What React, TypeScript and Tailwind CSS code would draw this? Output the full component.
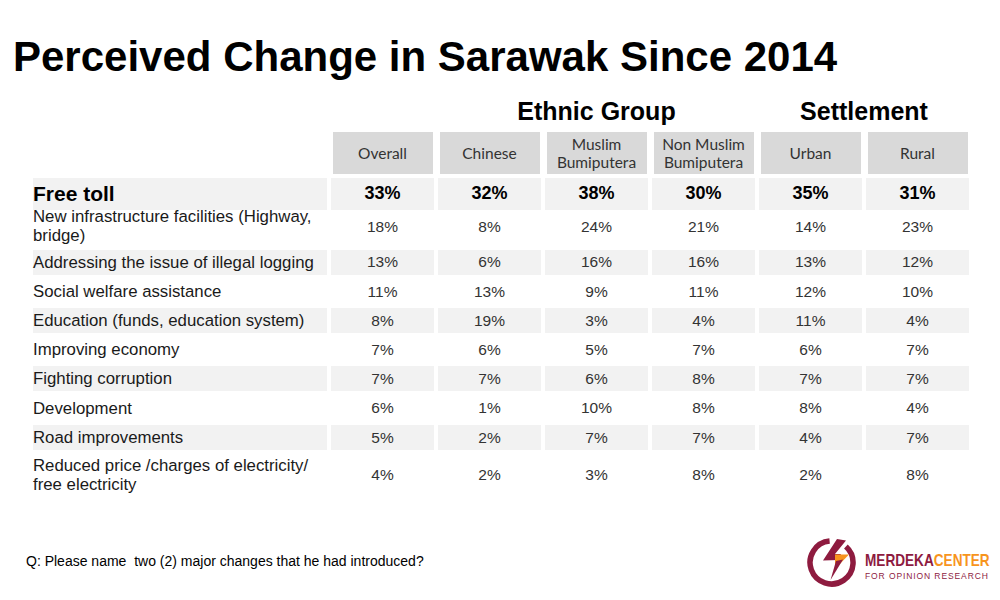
const cols = "grid grid-cols-[294px_repeat(6,103px)] gap-x-[4px]";

type Row = {
  label: React.ReactNode;
  values: string[];
  h: string;
  gray?: boolean;
  bold?: boolean;
};

const rows: Row[] = [
  { label: "Free toll", values: ["33%", "32%", "38%", "30%", "35%", "31%"], h: "h-[25px]", gray: true, bold: true },
  {
    label: (
      <>
        New infrastructure facilities (Highway,
        <br />
        bridge)
      </>
    ),
    values: ["18%", "8%", "24%", "21%", "14%", "23%"],
    h: "h-[38px]",
  },
  { label: "Addressing the issue of illegal logging", values: ["13%", "6%", "16%", "16%", "13%", "12%"], h: "h-[25px]", gray: true },
  { label: "Social welfare assistance", values: ["11%", "13%", "9%", "11%", "12%", "10%"], h: "h-[25px]" },
  { label: "Education (funds, education system)", values: ["8%", "19%", "3%", "4%", "11%", "4%"], h: "h-[25px]", gray: true },
  { label: "Improving economy", values: ["7%", "6%", "5%", "7%", "6%", "7%"], h: "h-[25px]" },
  { label: "Fighting corruption", values: ["7%", "7%", "6%", "8%", "7%", "7%"], h: "h-[25px]", gray: true },
  { label: "Development", values: ["6%", "1%", "10%", "8%", "8%", "4%"], h: "h-[25px]" },
  { label: "Road improvements", values: ["5%", "2%", "7%", "7%", "4%", "7%"], h: "h-[25px]", gray: true },
  {
    label: (
      <>
        Reduced price /charges of electricity/
        <br />
        free electricity
      </>
    ),
    values: ["4%", "2%", "3%", "8%", "2%", "8%"],
    h: "h-[42px]",
  },
];

const heads: React.ReactNode[] = [
  "Overall",
  "Chinese",
  <>
    Muslim
    <br />
    Bumiputera
  </>,
  <>
    Non Muslim
    <br />
    Bumiputera
  </>,
  "Urban",
  "Rural",
];

function Logo() {
  return (
    <div className="flex items-start">
      <svg width="56" height="56" viewBox="0 0 56 56" className="mt-[-5px]">
        <path d="M40.9 12.5 A21.5 21.5 0 1 1 24.6 7.1" fill="none" stroke="#8e1b3f" strokeWidth="5.5" />
        <path d="M32 5 L41 6.5 L30 20 L36 20 L33 26 L18 26.5 Z" fill="#8e1b3f" />
        <path d="M30 20.5 L44 20.5 L30 35 Z" fill="#f7941d" />
        <path d="M31 27 L38 25.5 L25.5 46 Z" fill="#8e1b3f" />
      </svg>
      <div className="ml-[4px] mt-[14px] flex w-[125px] flex-col">
        <div className="whitespace-nowrap text-[17px] font-bold leading-[16px]">
          <span className="inline-block origin-left scale-x-[0.8]">
            <span className="text-[#8e1b3f]">MERDEKA</span>
            <span className="text-[#f7941d]">CENTER</span>
          </span>
        </div>
        <div className="mt-[2px] whitespace-nowrap text-[8.5px] leading-[10px] tracking-[0.9px] text-[#8e1b3f]">
          FOR OPINION RESEARCH
        </div>
      </div>
    </div>
  );
}

export default function App() {
  return (
    <div className="h-[600px] w-[1000px] overflow-hidden bg-white font-['Liberation_Sans',Arial,sans-serif]">
      <h1 className="pl-[13px] pt-[33px] text-[42px] font-bold leading-[48px] text-black">
        Perceived Change in Sarawak Since 2014
      </h1>

      <div className="ml-[33px] mt-[15px] w-[936px]">
        {/* group headings */}
        <div className={`${cols} text-[25px] font-bold leading-[30px] text-black`}>
          <div className="col-span-2" />
          <div className="col-span-3 text-center">Ethnic Group</div>
          <div className="col-span-2 text-center">Settlement</div>
        </div>

        <div className="mt-[6px] flex flex-col gap-y-[4.2px]">
          <div className={`${cols} h-[42px]`}>
            <div />
            {heads.map((h, i) => (
              <div
                key={i}
                className="mx-[1.5px] flex items-center justify-center bg-[#d9d9d9] text-center font-['Lato',sans-serif] text-[15.5px] leading-[18px] text-[#333333]"
              >
                <span>{h}</span>
              </div>
            ))}
          </div>

          {rows.map((r, i) => (
            <div key={i} className={`${cols} ${r.h}`}>
              <div
                className={`flex items-center ${r.gray ? "bg-[#f2f2f2]" : ""} ${
                  r.bold ? "text-[21px] font-bold text-black" : "text-[16.8px] leading-[19px] text-[#1a1a1a]"
                }`}
              >
                <span>{r.label}</span>
              </div>
              {r.values.map((v, j) => (
                <div
                  key={j}
                  className={`flex items-center justify-center ${r.gray ? "bg-[#f2f2f2]" : ""} ${
                    r.bold ? "text-[18px] font-bold text-black" : "text-[15.5px] text-[#333333]"
                  }`}
                >
                  {v}
                </div>
              ))}
            </div>
          ))}
        </div>
      </div>

      <div className="mt-[43px] flex items-start justify-between pr-[10px]">
        <p className="ml-[26px] mt-[14px] whitespace-pre text-[14px] leading-[16px] text-black">
          Q: Please name  two (2) major changes that he had introduced?
        </p>
        <Logo />
      </div>
    </div>
  );
}
